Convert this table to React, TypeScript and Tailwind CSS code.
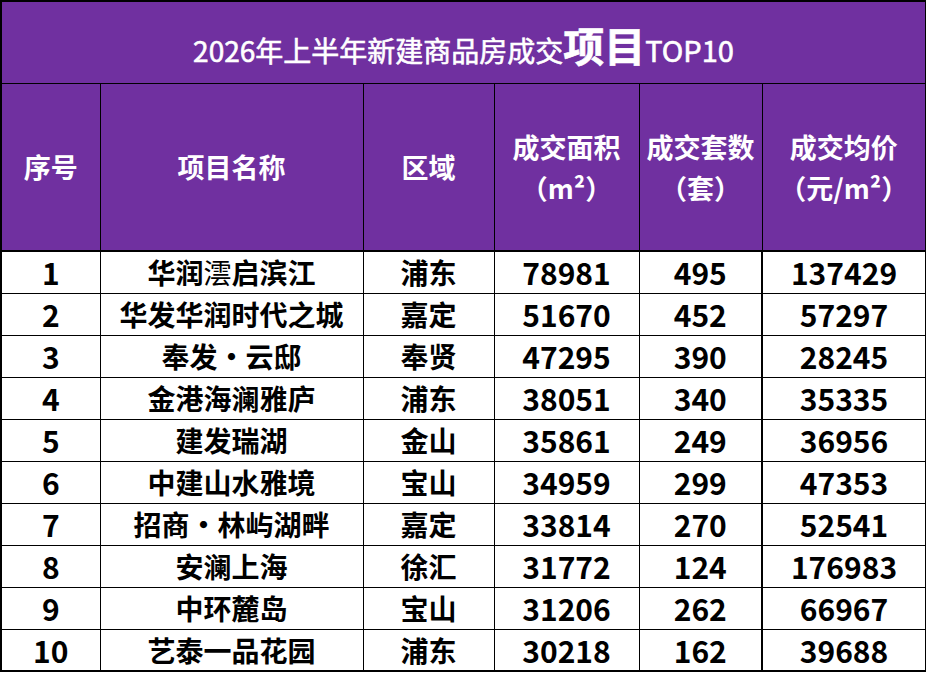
const rows = [
  { no: 1, name: "华润澐启滨江", area: "浦东", size: "78981", units: "495", price: "137429" },
  { no: 2, name: "华发华润时代之城", area: "嘉定", size: "51670", units: "452", price: "57297" },
  { no: 3, name: "奉发·云邸", area: "奉贤", size: "47295", units: "390", price: "28245" },
  { no: 4, name: "金港海澜雅庐", area: "浦东", size: "38051", units: "340", price: "35335" },
  { no: 5, name: "建发瑞湖", area: "金山", size: "35861", units: "249", price: "36956" },
  { no: 6, name: "中建山水雅境", area: "宝山", size: "34959", units: "299", price: "47353" },
  { no: 7, name: "招商·林屿湖畔", area: "嘉定", size: "33814", units: "270", price: "52541" },
  { no: 8, name: "安澜上海", area: "徐汇", size: "31772", units: "124", price: "176983" },
  { no: 9, name: "中环麓岛", area: "宝山", size: "31206", units: "262", price: "66967" },
  { no: 10, name: "艺泰一品花园", area: "浦东", size: "30218", units: "162", price: "39688" },
]

const font = "font-['Noto_Sans_CJK_SC',sans-serif]"

// 澐 falls back to a lighter face in the source image; the middle dot sits in a full-width slot
function Name({ text }: { text: string }) {
  return (
    <>
      {[...text].map((ch, i) =>
        ch === "澐" ? (
          <span key={i} className="font-normal">
            澐
          </span>
        ) : ch === "·" ? (
          <span key={i} className="inline-block w-[28px] text-center">
            ·
          </span>
        ) : (
          ch
        ),
      )}
    </>
  )
}

export default function App() {
  return (
    <div className={`w-[926px] h-[673px] bg-white ${font}`}>
      <table className="w-[925px] table-fixed border-collapse border-2 border-black">
        <colgroup>
          <col className="w-[99px]" />
          <col className="w-[263px]" />
          <col className="w-[131px]" />
          <col className="w-[145px]" />
          <col className="w-[123px]" />
          <col className="w-[164px]" />
        </colgroup>
        <thead>
          <tr className="h-[82px] bg-[#7030a0]">
            <th colSpan={6} className="border border-black p-0">
              <div className="flex items-baseline justify-center pt-1 text-white font-normal [-webkit-text-stroke:0.6px_white]">
                <span className="text-[28px] leading-none">2026年上半年新建商品房成交</span>
                <span className="text-[41px] leading-none font-bold">项目</span>
                <span className="text-[29px] leading-none">TOP10</span>
              </div>
            </th>
          </tr>
          <tr className="h-[168px] bg-[#7030a0] text-white text-[27px] font-bold leading-[41px]">
            <th className="border border-black border-b-2 p-0">序号</th>
            <th className="border border-black border-b-2 p-0">项目名称</th>
            <th className="border border-black border-b-2 p-0">区域</th>
            <th className="border border-black border-b-2 p-0">
              成交面积
              <br />
              （m²）
            </th>
            <th className="border border-black border-b-2 p-0">
              成交套数
              <br />
              （套）
            </th>
            <th className="border border-black border-b-2 p-0">
              成交均价
              <br />
              （元/m²）
            </th>
          </tr>
        </thead>
        <tbody className="text-black font-bold text-center">
          {rows.map((r) => (
            <tr key={r.no} className="h-[42px]">
              <td className="border border-black p-0 text-[30px] leading-none">{r.no}</td>
              <td className="border border-black p-0 text-[28px] leading-none whitespace-nowrap">
                <Name text={r.name} />
              </td>
              <td className="border border-black p-0 text-[28px] leading-none">{r.area}</td>
              <td className="border border-black p-0 text-[30px] leading-none">{r.size}</td>
              <td className="border border-black border-r-2 p-0 text-[30px] leading-none">{r.units}</td>
              <td className="border border-black p-0 text-[30px] leading-none">{r.price}</td>
            </tr>
          ))}
        </tbody>
      </table>
    </div>
  )
}
